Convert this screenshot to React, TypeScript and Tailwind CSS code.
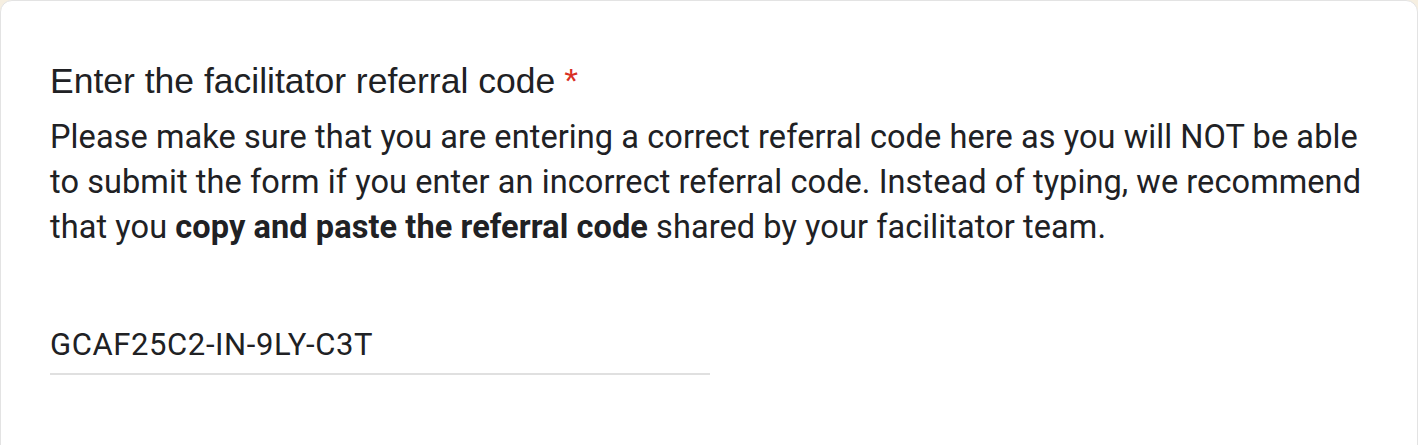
import React from "react";

export default function App() {
  return (
    <div className="w-[1418px] h-[445px] bg-[#f6efe1] overflow-hidden">
      <div className="h-[460px] bg-white border border-[#e3e3e3] rounded-t-[12px] pl-[49px] pr-[30px] pt-[58px]">
        <div className="text-[35.5px] leading-[44px] text-[#202124] font-['Liberation_Sans',Arial,sans-serif]">
          Enter the facilitator referral code
          <span className="text-[#d93025] ml-[9px]">*</span>
        </div>
        <p className="mt-[12px] text-[32.5px] leading-[45px] text-[#202124] font-['Roboto',sans-serif] tracking-[0.08px]">
          Please make sure that you are entering a correct referral code here as you will NOT be able to
          submit the form if you enter an incorrect referral code. Instead of typing, we recommend that you{" "}
          <b className="font-bold">copy and paste the referral code</b> shared by your facilitator team.
        </p>
        <div className="mt-[77px] w-[660px]">
          <div className="text-[31px] leading-[36px] tracking-[0.6px] text-[#202124] font-['Roboto',sans-serif] pb-[10px]">
            GCAF25C2-IN-9LY-C3T
          </div>
          <div className="h-[2px] bg-[#e0e0e0]" />
        </div>
      </div>
    </div>
  );
}
